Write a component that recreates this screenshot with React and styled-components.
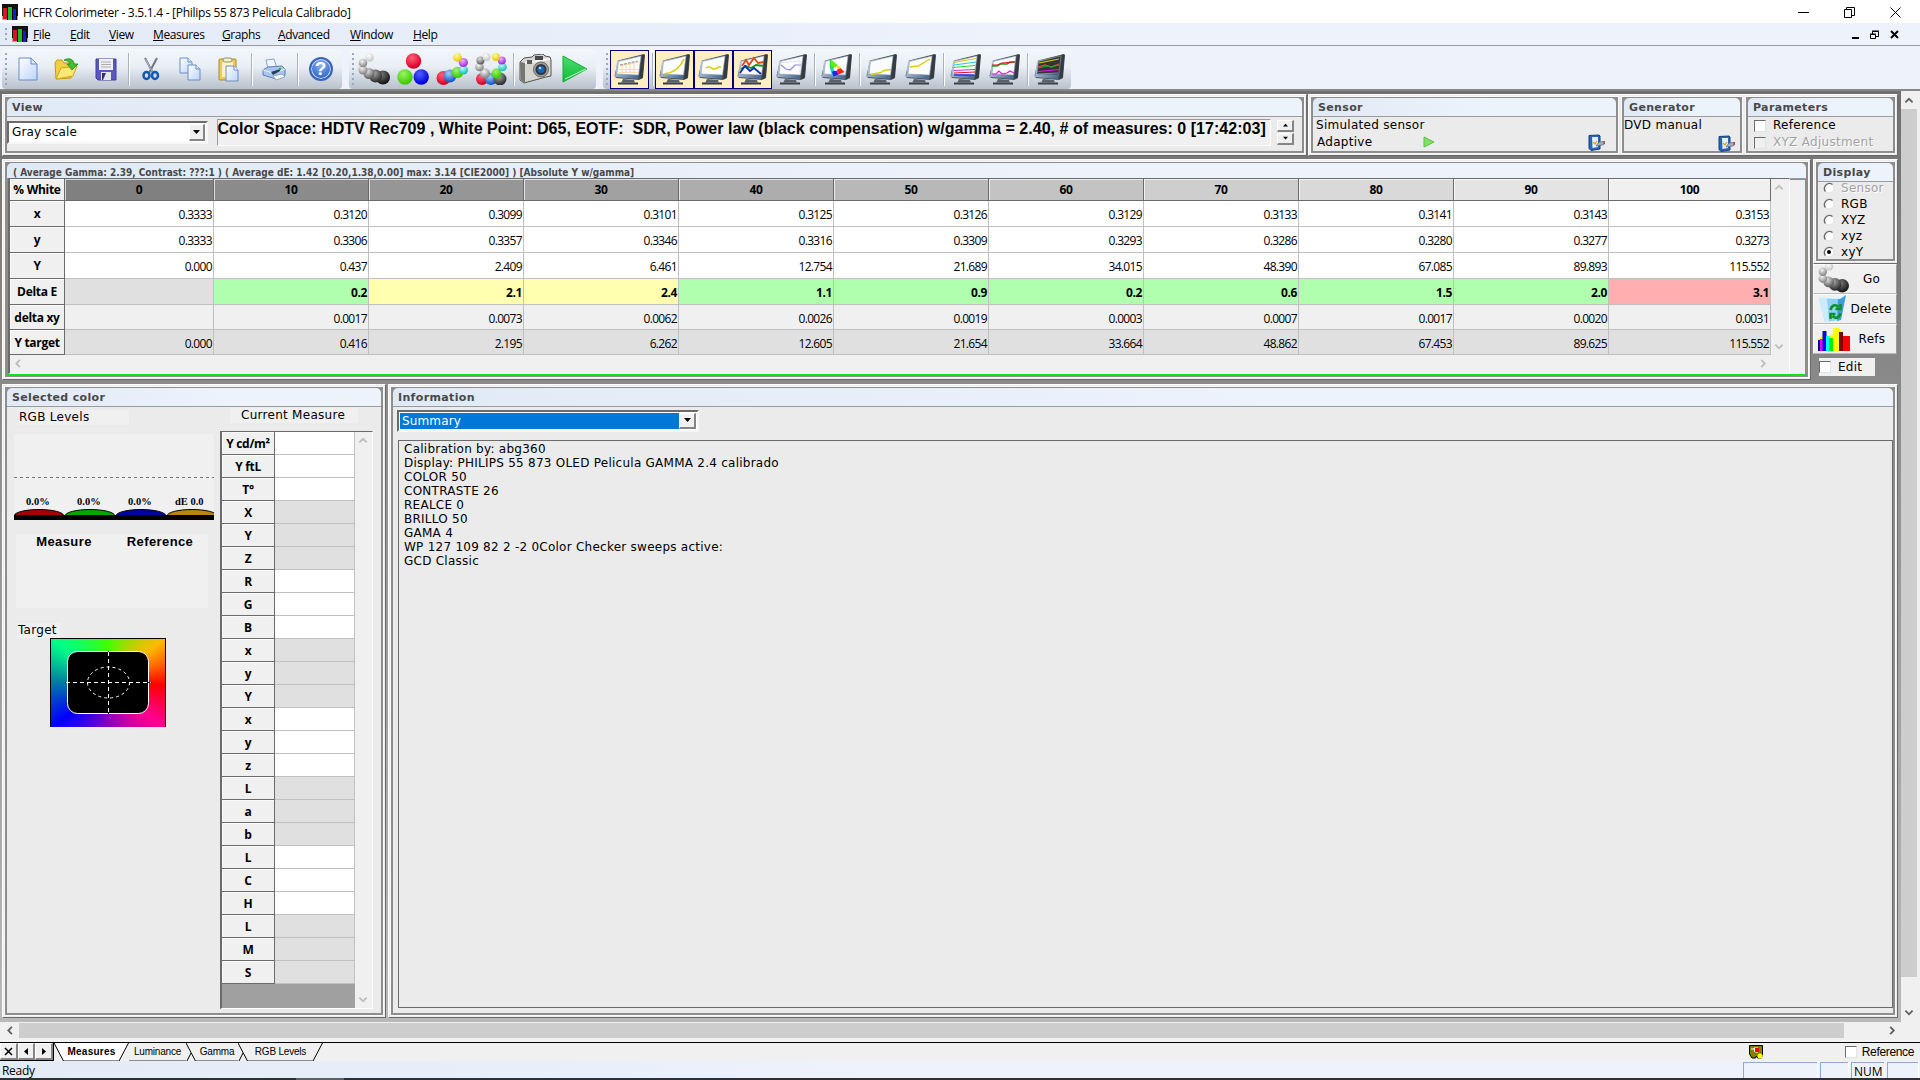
import React from "react";
import styled, { createGlobalStyle, css } from "styled-components";

const GlobalStyle = createGlobalStyle`
  * {
    box-sizing: border-box;
  }
  body {
    margin: 0;
    overflow: hidden;
    background: #fff;
  }
`;

const ui = `"Open Sans", "Noto Sans", sans-serif`;
const verdana = `"DejaVu Sans", sans-serif`;
const arial = `"Liberation Sans", Arial, sans-serif`;

const Window = styled.div`
  width: 1920px;
  height: 1080px;
  display: flex;
  flex-direction: column;
  font-family: ${ui};
  font-size: 12px;
  color: #000;
  white-space: pre;
  overflow: hidden;
`;

/* ---------- title and menu ---------- */

const TitleBar = styled.div`
  height: 23px;
  display: flex;
  align-items: center;
  padding: 1px 19px 0 2px;
  background: #fff;
  letter-spacing: -0.27px;
`;

const TitleText = styled.span`
  flex: 1;
  padding-left: 5px;
`;

const WindowButtons = styled.div`
  display: flex;
  align-items: center;
  gap: ${(props) => props.$gap}px;
`;

const MenuBar = styled.div`
  height: 23px;
  display: flex;
  align-items: center;
  padding: 0 21px 0 5px;
  border-bottom: 1px solid #9a9a9a;
  background: linear-gradient(90deg, #e3ebf7, #eef3fb 60%);
`;

const MenuItems = styled.div`
  flex: 1;
  display: flex;
  gap: 19px;
  padding-left: 5px;
`;

const MenuItem = styled.span`
  width: ${(props) => props.$w}px;
  letter-spacing: -0.4px;
  &::first-letter {
    text-decoration: underline;
  }
`;

const Grip = styled.div`
  width: 2px;
  height: ${(props) => props.$h}px;
  margin-right: ${(props) => props.$gap}px;
  background: repeating-linear-gradient(#93a8c6 0 2px, transparent 2px 5px);
`;

/* ---------- toolbars ---------- */

const ToolBars = styled.div`
  height: 45px;
  display: flex;
  gap: 7px;
  padding: 3px 0 0 2px;
  background: #eef3fb;
  border-bottom: 2px solid #878787;
`;

const ToolBar = styled.div`
  width: ${(props) => props.$w}px;
  display: flex;
  align-items: center;
  padding-left: 3px;
  border-radius: 4px;
  background: linear-gradient(#f3f7fc 0%, #e9eef4 45%, #cdd5df 75%, #b9c1cc 100%);
`;

const ToolButton = styled.div`
  width: 39px;
  height: 39px;
  display: flex;
  align-items: center;
  justify-content: center;
  ${(props) =>
    props.$active &&
    css`
      background: #ffeec2;
      border: 1px solid #000080;
    `}
`;

const ToolSep = styled.div`
  width: 1px;
  height: 33px;
  margin: 0 2px 0 3px;
  background: #aab2bd;
  box-shadow: 1px 0 #fff;
`;

/* ---------- workspace ---------- */

const Workspace = styled.div`
  flex: 1;
  display: flex;
  border-bottom: 2px solid #f4f4f4;
  background: #f0f0f0;
`;

const ViewPort = styled.div`
  width: 1901px;
  display: flex;
  flex-direction: column;
`;

const Desk = styled.div`
  height: 931px;
  display: flex;
  flex-direction: column;
  padding: 3px 0 0 2px;
  background: linear-gradient(#707070, #8a8a8a 32%, #b9b9b9);
`;

const Row = styled.div`
  height: ${(props) => props.$h}px;
  margin-bottom: ${(props) => props.$after || 0}px;
  display: flex;
  gap: ${(props) => props.$gap}px;
`;

const Frame = styled.div`
  width: ${(props) => props.$w}px;
  height: ${(props) => (props.$h ? props.$h + "px" : "auto")};
  flex: none;
  display: flex;
  gap: 4px;
  padding: 2px;
  border: 1px solid #fff;
  border-right-color: #6c6c6c;
  border-bottom-color: #6c6c6c;
  background: #ececec;
`;

const GroupBox = styled.div`
  width: ${(props) => (props.$w ? props.$w + "px" : "auto")};
  flex: ${(props) => (props.$w ? "none" : 1)};
  min-width: 0;
  display: flex;
  flex-direction: column;
  border: 2px solid #8d8d8d;
  border-top-width: 1px;
  box-shadow: 0 0 0 1px #fafafa;
  background: linear-gradient(#8d8d8d 8px, #ebebeb 8px);
`;

const GroupTitle = styled.div`
  height: 19px;
  flex: none;
  padding: 1px 0 0 5px;
  overflow: hidden;
  border-bottom: 1px solid #9b9b9b;
  border-radius: 5px 5px 0 0;
  background: linear-gradient(90deg, #e0eaf6, #edf3fb 60%);
  font: bold 11px/17px ${verdana};
  letter-spacing: 0.35px;
  color: #484848;
  ${(props) =>
    props.$small &&
    css`
      height: 16px;
      padding-left: 6px;
      font: bold 10px/17px "DejaVu Sans Condensed", ${verdana};
      font-stretch: condensed;
      letter-spacing: 0;
    `}
`;

function Group({ title, w, small, children }) {
  return (
    <GroupBox $w={w}>
      <GroupTitle $small={small}>{title}</GroupTitle>
      {children}
    </GroupBox>
  );
}

const Label = styled.div`
  font: 12px/15px ${verdana};
  letter-spacing: 0.28px;
  ${(props) =>
    props.$off &&
    css`
      color: #a3a3a3;
      text-shadow: 1px 1px #fff;
    `}
`;

const Box = styled.div`
  width: 12px;
  height: 12px;
  flex: none;
  border: 1px solid #6b6b6b;
  border-right-color: #e3e3e3;
  border-bottom-color: #e3e3e3;
  background: ${(props) => (props.$off ? "#f0f0f0" : "#fff")};
`;

/* ---------- view row ---------- */

const ViewBody = styled.div`
  flex: 1;
  display: flex;
  padding: 2px 8px 0 0;
`;

const Combo = styled.div`
  width: ${(props) => props.$w}px;
  height: ${(props) => props.$h}px;
  margin-top: ${(props) => props.$top || 0}px;
  display: flex;
  padding: 1px;
  border: 2px solid #6b6b6b;
  border-right-color: #f6f6f6;
  border-bottom-color: #f6f6f6;
  background: #fff;
`;

const ComboText = styled.div`
  flex: 1;
  padding-left: 2px;
  font: 12px/17px ${verdana};
  letter-spacing: 0.15px;
  background: ${(props) => (props.$selected ? "#0078d7" : "#fff")};
  color: ${(props) => (props.$selected ? "#fff" : "#000")};
`;

const RaisedButton = styled.div`
  width: ${(props) => props.$w}px;
  height: ${(props) => (props.$h ? props.$h + "px" : "auto")};
  display: flex;
  align-items: center;
  justify-content: center;
  border: 1px solid #fff;
  border-right: 2px solid #858585;
  border-bottom: 2px solid #858585;
  background: #f0f0f0;
`;

const InfoField = styled.div`
  width: 1057px;
  height: 27px;
  margin: 0 6px 0 9px;
  border: 1px solid #9a9a9a;
  border-right-color: #fff;
  border-bottom-color: #fff;
  background: #f0f0f0;
  font: bold 16px/17px ${arial};
  letter-spacing: 0.03px;
`;

const Spinner = styled.div`
  display: flex;
  flex-direction: column;
  gap: 1px;
  padding-top: 1px;
`;

const SensorBody = styled.div`
  flex: 1;
  display: flex;
  flex-direction: column;
  padding: 0 ${(props) => props.$right}px 0 ${(props) => props.$left}px;
  gap: 1px;
`;

const SensorLine = styled.div`
  display: flex;
  align-items: center;
  height: 16px;
`;

const Spacer = styled.div`
  flex: ${(props) => (props.$w ? "none" : 1)};
  width: ${(props) => props.$w || 0}px;
`;

const CheckRow = styled.div`
  display: flex;
  align-items: center;
  gap: 7px;
  height: 17px;
`;

const CheckList = styled.div`
  padding: 0 0 0 6px;
`;

/* ---------- measures table ---------- */

const TableArea = styled.div`
  flex: 1;
  display: flex;
  border: 1px solid #14e014;
  border-top: none;
  background: linear-gradient(#14e014, #14e014) top right / 20px 1px no-repeat #f0f0f0;
`;

const TablePane = styled.div`
  display: flex;
  flex-direction: column;
  margin-top: -1px;
  width: 1782px;
  border: 1px solid #6b6b6b;
  border-left-width: 2px;
  border-right-color: #fdfdfd;
  border-bottom-color: #fdfdfd;
  background: #f0f0f0;
`;

const TableRow = styled.div`
  display: grid;
  grid-template-columns: 55px 149px repeat(9, 155px) 162px;
  height: ${(props) => props.$h}px;
`;

const HeadCell = styled.div`
  display: flex;
  align-items: center;
  justify-content: center;
  border-right: 1px solid #6b6b6b;
  border-bottom: 1px solid #6b6b6b;
  box-shadow: inset 1px 1px #ffffffb0;
  background: ${(props) => props.$bg || "#f0f0f0"};
  font-weight: bold;
  letter-spacing: -0.3px;
`;

const Cell = styled.div`
  display: flex;
  align-items: center;
  justify-content: flex-end;
  padding: 2px 1px 0 0;
  border-right: 1px solid #c0c0c0;
  border-bottom: 1px solid #c0c0c0;
  background: ${(props) => props.$bg};
  font-weight: ${(props) => (props.$bold ? "bold" : "normal")};
  letter-spacing: ${(props) => (props.$bold ? -0.4 : -0.65)}px;
`;

const TableFoot = styled.div`
  flex: 1;
  display: flex;
  align-items: center;
  justify-content: space-between;
  padding: 0 21px 2px 4px;
`;

const TableMain = styled.div`
  display: flex;
`;

const Arrows = styled.div`
  width: 18px;
  display: flex;
  flex-direction: column;
  align-items: center;
  justify-content: space-between;
  padding: 5px 2px 4px 0;
  background: #f0f0f0;
`;

/* ---------- display column ---------- */

const SideColumn = styled.div`
  width: 86px;
  display: flex;
  flex-direction: column;
`;

const RadioList = styled.div`
  flex: 1;
  display: flex;
  flex-direction: column;
  margin-top: -2px;
  padding-left: 5px;
`;

const RadioRow = styled.div`
  height: 16px;
  display: flex;
  align-items: center;
  gap: 6px;
`;

const SideButton = styled.div`
  height: 30px;
  width: 84px;
  display: flex;
  align-items: center;
  padding: 0 2px 0 4px;
  border: 1px solid #fbfbfb;
  border-right-color: #9a9a9a;
  border-bottom-color: #b8b8b8;
  background: #f0f0f0;
`;

const SideLabel = styled(Label)`
  flex: 1;
  text-align: center;
`;

const EditBox = styled.div`
  width: 56px;
  height: 18px;
  margin: 4px 0 0 6px;
  display: flex;
  align-items: center;
  gap: 7px;
  background: #f0f0f0;
`;

/* ---------- selected color ---------- */

const ColorBody = styled.div`
  flex: 1;
  display: flex;
`;

const LeftSide = styled.div`
  width: 213px;
  display: flex;
  flex-direction: column;
  padding: 3px 0 0 7px;
`;

const Caption = styled(Label)`
  width: ${(props) => props.$w}px;
  padding-left: ${(props) => props.$pad || 1}px;
  margin-left: ${(props) => props.$x || 0}px;
  background: #f0f0f0;
`;

const Levels = styled.svg`
  display: block;
  margin: 9px 0 14px;
  background: #f0f0f0;
  font: bold 10.5px "Liberation Serif", serif;
`;

const Compare = styled.div`
  width: 192px;
  height: 74px;
  margin: 0 0 15px 2px;
  display: grid;
  grid-template-columns: 1fr 1fr;
  background: #f0f0f0;
  text-align: center;
  font: bold 13px/16px ${arial};
  letter-spacing: 0.4px;
`;

const Target = styled.div`
  width: 116px;
  height: 89px;
  margin: 0 0 0 36px;
  border: 1px solid #000;
  border-bottom: none;
  background: conic-gradient(
    #40ff00 0deg,
    #ffb800 52deg,
    #ff0000 92deg,
    #ff0090 128deg,
    #8800c0 180deg,
    #0000ff 232deg,
    #0080a0 272deg,
    #00ff88 308deg,
    #40ff00 360deg
  );
`;

const MeasureSide = styled.div`
  display: flex;
  flex-direction: column;
  padding-top: 1px;
`;

const MeasureGrid = styled.div`
  width: 153px;
  height: 578px;
  margin-top: 8px;
  display: flex;
  border: 1px solid #6b6b6b;
  border-left-width: 2px;
  border-right-color: #fff;
  border-bottom-color: #fff;
  background: #f0f0f0;
`;

const MeasureRows = styled.div`
  width: 133px;
  display: flex;
  flex-direction: column;
  background: #a0a0a0;
`;

const MeasureRow = styled.div`
  height: 23px;
  display: grid;
  grid-template-columns: 53px 80px;
`;

/* ---------- information ---------- */

const InfoBody = styled.div`
  flex: 1;
  display: flex;
  flex-direction: column;
  padding: 3px 0 5px 4px;
`;

const Notes = styled.div`
  flex: 1;
  margin: 8px 0 0 1px;
  padding: 1px 5px;
  border: 1px solid #6b6b6b;
  font: 12px/14px ${verdana};
  letter-spacing: 0.25px;
`;

/* ---------- scroll bars ---------- */

const HScroll = styled.div`
  height: 17px;
  display: flex;
  align-items: center;
  padding: 1px 4px 1px 6px;
  background: #f0f0f0;
`;

const HThumb = styled.div`
  width: 1825px;
  height: 15px;
  margin: 0 auto 0 3px;
  background: #cdcdcd;
`;

const VScroll = styled.div`
  width: 16px;
  display: flex;
  flex-direction: column;
  align-items: center;
  padding-top: 6px;
  background: #f0f0f0;
`;

const VThumb = styled.div`
  width: 16px;
  height: 868px;
  margin: 3px 0 31px;
  background: #cdcdcd;
`;

/* ---------- tabs and status ---------- */

const TabBar = styled.div`
  height: 19px;
  display: flex;
  border-top: 1px solid #000;
  background: #f0f0f0;
  font: 10px/17px ${arial};
`;

const TabNav = styled.div`
  width: 54px;
  height: 18px;
  display: flex;
  border-right: 1px solid #000;
  border-bottom: 1px solid #000;
`;

const Tab = styled.div`
  width: ${(props) => props.$w}px;
  height: 18px;
  text-align: center;
  border-bottom: 1px solid #8d8d8d;
  background: ${(props) => (props.$active ? "#fff" : "transparent")};
  font-weight: ${(props) => (props.$active ? "bold" : "normal")};
  letter-spacing: ${(props) => (props.$active ? 0.25 : -0.2)}px;
`;

const TabRight = styled.div`
  flex: 1;
  display: flex;
  align-items: center;
  justify-content: flex-end;
  gap: 5px;
  padding-right: 6px;
  font: 12px/17px ${arial};
  letter-spacing: -0.35px;
`;

const StatusBar = styled.div`
  height: 17px;
  display: flex;
  gap: 3px;
  padding: 1px 2px 0 2px;
  line-height: 18px;
  background: linear-gradient(90deg, #e3ebf7, #eef3fb 50%);
`;

const StatusText = styled.span`
  flex: 1;
  letter-spacing: -0.3px;
`;

const StatusPane = styled.div`
  width: ${(props) => props.$w}px;
  padding-left: 2px;
  border: 1px solid #8faad0;
  border-width: 1px 0 0 1px;
  box-shadow: 1px 0 #fff;
  line-height: 18px;
`;

const TaskEdge = styled.div`
  height: 2px;
  background: linear-gradient(90deg, #2f3035 296px, #606166 296px 344px, #2f3035 344px);
`;

/* ---------- drawings ---------- */

function Logo({ size = 16 }) {
  return (
    <svg width={size} height={size} viewBox="0 0 16 16">
      <rect width="16" height="16" fill="#111" />
      <path d="M0 12h16v4H0z" fill="#aaa" />
      <rect x="1" y="4" width="4" height="11" fill="#e01020" />
      <rect x="6" y="3" width="4" height="13" fill="#18c030" />
      <rect x="11" y="5" width="3" height="11" fill="#1020d0" />
      <path d="M5.500 4v12M10.500 3v13M14.500 5v11" stroke="#000" />
    </svg>
  );
}

function Chevron({ dir, color = "#606060" }) {
  const paths = {
    up: "M1 6l4-4 4 4",
    down: "M1 3l4 4 4-4",
    left: "M6 1L2 5l4 4",
    right: "M3 1l4 4-4 4",
  };
  return (
    <svg width="10" height="9" viewBox="0 0 10 10" fill="none" stroke={color} strokeWidth="2">
      <path d={paths[dir]} />
    </svg>
  );
}

function Triangle({ dir, s = 7 }) {
  const points = {
    down: "0,1 7,1 3.5,5",
    up: "0,5 7,5 3.5,1",
    left: "5,0 5,7 1,3.5",
    right: "2,0 2,7 6,3.5",
  };
  return (
    <svg width={s} height={s} viewBox="0 0 7 7">
      <polygon points={points[dir]} />
    </svg>
  );
}

const HiddenDefs = styled.svg`
  position: absolute;
`;

const ballColors = {
  white: ["#fff", "#c8c8c8"],
  light: ["#f4f4f4", "#888"],
  gray: ["#e0e0e0", "#606060"],
  dark: ["#a8a8a8", "#303030"],
  black: ["#777", "#181818"],
  red: ["#ff6078", "#d80028"],
  green: ["#98f860", "#40c808"],
  blue: ["#5060ff", "#0000d8"],
  sky: ["#a0d0ff", "#1858c8"],
  cyan: ["#c0fff8", "#18c0b8"],
  violet: ["#f0b0ff", "#a030d8"],
  yellow: ["#ffffa0", "#e8c800"],
};

function Defs() {
  return (
    <HiddenDefs width="0" height="0">
      <defs>
        {Object.entries(ballColors).map(([name, [a, b]]) => (
          <radialGradient key={name} id={name} cx="0.4" cy="0.3" r="0.65">
            <stop offset="0" stopColor={a} />
            <stop offset="1" stopColor={b} />
          </radialGradient>
        ))}
        <linearGradient id="paper" x2="1" y2="1">
          <stop offset="0" stopColor="#fff" />
          <stop offset="1" stopColor="#bcd4fa" />
        </linearGradient>
        <linearGradient id="shell" x2="1" y2="0.6">
          <stop offset="0" stopColor="#d4e2f2" />
          <stop offset="1" stopColor="#4d6c94" />
        </linearGradient>
        <linearGradient id="go" x2="0" y2="1">
          <stop offset="0" stopColor="#4be070" />
          <stop offset="1" stopColor="#10b838" />
        </linearGradient>
      </defs>
    </HiddenDefs>
  );
}

function Balls({ list, size = 32, box = "0 0 32 32" }) {
  return (
    <svg width={size} height={size} viewBox={box}>
      {list.map(([x, y, r, fill], i) => (
        <circle key={i} cx={x} cy={y} r={r} fill={`url(#${fill})`} />
      ))}
    </svg>
  );
}

const grayBalls = [
  [25, 24.500, 7, "black"],
  [17.500, 23, 6.500, "dark"],
  [11, 20.500, 5.500, "gray"],
  [5, 17, 4.500, "light"],
  [5, 10, 4.300, "light"],
  [11.500, 4.500, 4.300, "white"],
];
const rgbBalls = [
  [16.500, 8, 7.700, "red"],
  [8, 24, 7.700, "green"],
  [24.200, 24, 7.700, "blue"],
];
const hueBalls = [
  [7.500, 25, 7, "red"],
  [14, 23, 6.500, "sky"],
  [21.500, 19.500, 5.700, "green"],
  [27.500, 17, 4.500, "cyan"],
  [27.300, 9.500, 4.600, "violet"],
  [21.500, 4.500, 4.300, "yellow"],
];
const ringBalls = [
  [7, 26, 6, "red"],
  [16, 26, 6, "sky"],
  [25, 26, 6.500, "dark"],
  [21.500, 20.500, 5, "green"],
  [10, 20.500, 5, "light"],
  [4.500, 14, 4.300, "light"],
  [5.500, 7.500, 4, "gray"],
  [11.500, 4, 4, "white"],
  [27.500, 14, 4.300, "cyan"],
  [26.800, 7.500, 4, "violet"],
  [21, 4, 4, "yellow"],
];

function Monitor({ dark, children }) {
  return (
    <svg width="33" height="33" viewBox="0 0 33 33">
      <polygon points="5,7.500 31,1 32,2 30,25 26,27 3,25 1.500,23" fill="#4a5058" />
      <polygon points="4,8 28,3 25,26 2,24" fill="url(#shell)" />
      <polygon points="29,1.500 31.500,2 29.500,25 26,26" fill="#343a42" />
      <polygon points="5.500,8.500 28,3 25.500,22 4,21" fill={dark ? "#333" : "#fbfcfc"} stroke="#8898a8" strokeWidth="0.5" />
      <polygon points="10,26 21,27 22,30 8,30" fill="#59616b" />
      <path d="M5 30.500h20" stroke="#343a42" strokeWidth="2" />
      <path d="M6 29.700h17" stroke="#8a929b" strokeWidth="0.600" />
      <g fill="none" strokeWidth="1.200">{children}</g>
    </svg>
  );
}

const monitors = {
  table: (
    <Monitor>
      <path d="M7 13l19-4M6 16.500h20M6 19.500h19M9 12v8M13 11v9M17 10v10M21 10v11" stroke="#f7dcae" />
      <path d="M7 12l18-4" stroke="#999" strokeDasharray="3 1" />
    </Monitor>
  ),
  luminance: (
    <Monitor>
      <path d="M6 21c9-1 16-6 20-15" stroke="#d8d000" strokeWidth="1.500" />
    </Monitor>
  ),
  gamma: (
    <Monitor>
      <path d="M9 15c4-3 5 1 8 1s4-3 7-2" stroke="#d8d000" strokeWidth="1.500" />
    </Monitor>
  ),
  rgb: (
    <Monitor>
      <path d="M5 16l5-3 5 2 5-3 8 1" stroke="#209020" strokeWidth="1.800" />
      <path d="M4 20l5-7 5 5 4-3 7 6" stroke="#1030a0" strokeWidth="1.800" />
      <path d="M6 13l4-6 3 5 5-7 4 5 6-1" stroke="#e04818" strokeWidth="1.800" />
    </Monitor>
  ),
  temp: (
    <Monitor>
      <path d="M6 12l5 4 4 1 5-5 6 0" stroke="#9088e0" />
      <path d="M5 10l20-2v12" stroke="#d8d8e8" strokeWidth="0.700" />
    </Monitor>
  ),
  cie: (
    <Monitor>
      <path d="M11 6.500c-1.500 1-1.500 5-1 9l6 1z" fill="#20e040" />
      <path d="M11 6.500l6 5-1 5-5-4z" fill="#60f000" />
      <path d="M10 15l6 1-3 7.500c-1-1-2-4-3-8.500z" fill="#20c8f0" />
      <path d="M16 16l-4 3 1.500 4.500 5-2z" fill="#3020f0" />
      <path d="M16 16l2.500 5.500 6-2.500-4-4z" fill="#ff2020" />
      <path d="M17 11.500l4 3.500-5 2z" fill="#f8d820" />
      <circle cx="15.500" cy="16" r="2" fill="#fff" />
    </Monitor>
  ),
  nearBlack: (
    <Monitor>
      <path d="M6 21.500l10-2 3-2 7-1" stroke="#d8d000" strokeWidth="1.400" />
    </Monitor>
  ),
  nearWhite: (
    <Monitor>
      <path d="M6 14l8-1 12-7" stroke="#d8d000" strokeWidth="1.400" />
    </Monitor>
  ),
  satLum: (
    <Monitor>
      <path d="M5 9.500l22-4" stroke="#d8d000" />
      <path d="M5 12l22-3" stroke="#20d0e0" />
      <path d="M5 14.500l21-2" stroke="#20e020" />
      <path d="M5 17.500l21-1" stroke="#f010f0" />
      <path d="M5 20l21-1" stroke="#e01020" />
      <path d="M5 22h20" stroke="#1020f0" />
    </Monitor>
  ),
  satShift: (
    <Monitor>
      <path d="M4 13h5l3-2h7l3-2h5" stroke="#20a020" strokeWidth="1.600" />
      <path d="M4 12l6 0 4-2 13-1" stroke="#e01020" />
      <path d="M4 21h4l3-3 3 3 5-1 3-2 4 2" stroke="#f010f0" />
    </Monitor>
  ),
  combo: (
    <Monitor dark>
      <path d="M6 10l20-4" stroke="#d8d000" />
      <path d="M5 14l7-2 6 2 8-3" stroke="#e05020" />
      <path d="M5 15l9-2 5 1 7-2" stroke="#20a040" />
      <path d="M5 18.500l21-2" stroke="#f010f0" />
      <path d="M5 21l20-1" stroke="#8080f0" />
    </Monitor>
  ),
};

function NewIcon() {
  return (
    <svg width="20" height="24" viewBox="0 0 20 24">
      <path d="M1 1h12l6 6v16H1z" fill="url(#paper)" stroke="#6b8cc4" />
      <path d="M13 1v6h6z" fill="#dce8fb" stroke="#6b8cc4" />
    </svg>
  );
}

function OpenIcon() {
  return (
    <svg width="25" height="24" viewBox="0 0 25 24">
      <path d="M2 22L1 6l2-3h5l2 3h8v4l-1 11z" fill="#f3cf45" stroke="#c79a10" />
      <path d="M2 22L7 11l16-2-4 10z" fill="#ffe877" stroke="#d0a418" />
      <path d="M10 3c6-3 10 0 10 4h4l-6 6-5-6h3c0-2-2-3-6-4z" fill="#46bd35" stroke="#208a18" strokeWidth="0.800" />
    </svg>
  );
}

function SaveIcon() {
  return (
    <svg width="22" height="23" viewBox="0 0 22 23">
      <path d="M1 1h20v21H3l-2-2z" fill="#5a58c0" stroke="#403f9c" />
      <rect x="4" y="1" width="14" height="11" fill="#f1f1f4" />
      <path d="M6 4h10M6 6.500h10M6 9h10" stroke="#aaa" />
      <rect x="6" y="14" width="10" height="8" fill="#e6e6ee" />
      <path d="M7 15h4l-3 7h-1z" fill="#34346c" />
    </svg>
  );
}

function CutIcon() {
  return (
    <svg width="18" height="24" viewBox="0 0 18 24" fill="none">
      <path d="M3 1l8 15M15 1L7 16" stroke="#6a7684" strokeWidth="2" />
      <path d="M3.500 2l7 13" stroke="#d2dae2" strokeWidth="0.700" />
      <ellipse cx="4.500" cy="18.500" rx="3" ry="3.500" stroke="#1558b0" strokeWidth="2.500" />
      <ellipse cx="13" cy="18.500" rx="3" ry="3.500" stroke="#1558b0" strokeWidth="2.500" />
    </svg>
  );
}

function CopyIcon() {
  return (
    <svg width="22" height="24" viewBox="0 0 22 24" fill="url(#paper)" stroke="#6b8cc4">
      <path d="M1 1h8l4 4v11H1z" />
      <path d="M9 1v4h4" />
      <path d="M9 8h8l4 4v11H9z" />
      <path d="M17 8v4h4" />
    </svg>
  );
}

function PasteIcon() {
  return (
    <svg width="21" height="25" viewBox="0 0 21 25">
      <rect x="1" y="2" width="17" height="21" rx="1" fill="#efca55" stroke="#a88a2c" />
      <rect x="4" y="5" width="11" height="15" fill="#fff4c8" />
      <rect x="5" y="1" width="9" height="4" rx="2" fill="#f3f1d8" stroke="#96906c" />
      <path d="M8 9h8l4 4v11H8z" fill="url(#paper)" stroke="#6b8cc4" />
      <path d="M16 9v4h4" fill="#fff" stroke="#6b8cc4" />
    </svg>
  );
}

function PrintIcon() {
  return (
    <svg width="24" height="23" viewBox="0 0 24 23">
      <path d="M4 2l8-1 3 9-9 1z" fill="#eef5ff" stroke="#8aa4c6" />
      <path d="M1 12l5-3 14-1 3 3v6l-9 4-13-4z" fill="#a9c6ee" stroke="#5c7eac" />
      <path d="M1 12l10 3 12-4" fill="none" stroke="#e8f2ff" />
      <path d="M9 14l9-3v2l-7 4z" fill="#263c66" />
      <path d="M11 18l9-2 3 3-9 3z" fill="#fff" stroke="#8aa4c6" />
      <circle cx="18" cy="11" r="1.200" fill="#2eb040" />
    </svg>
  );
}

const HelpBadge = styled.div`
  width: 24px;
  height: 24px;
  border: 2px solid #3a66b4;
  border-radius: 50%;
  box-shadow: inset 0 0 0 1px #cfe0fb;
  background: radial-gradient(circle at 50% 30%, #8db4f4, #2f66cc 75%);
  color: #fff;
  font: bold 19px/20px ${arial};
  text-align: center;
`;

function CameraIcon() {
  return (
    <svg width="33" height="30" viewBox="0 0 33 30">
      <path d="M1 8l4-4 8-1 2-2 9-1 2 2 5 1 1 3v16l-5 1-22 6-4-3z" fill="#d7d5d0" stroke="#55534f" />
      <path d="M1 8l5 1v20l-4-3z" fill="#77756f" />
      <path d="M6 9l25-4" stroke="#f8f8f6" strokeWidth="2" />
      <rect x="16" y="2" width="8" height="4" fill="#45484e" />
      <circle cx="22" cy="15.500" r="7.500" fill="#a09e9a" stroke="#6c6a68" />
      <circle cx="22" cy="15.500" r="5.500" fill="#2f3540" />
      <circle cx="22" cy="15.500" r="3.600" fill="#1666b8" />
      <circle cx="21" cy="14" r="1.300" fill="#9fd8ff" />
      <rect x="8" y="6" width="5" height="4" fill="#5a5c60" />
    </svg>
  );
}

function PlayIcon() {
  return (
    <svg width="26" height="28" viewBox="0 0 26 28">
      <path d="M1 1l24 13L1 27z" fill="url(#go)" stroke="#18a838" />
      <path d="M3 24l21-10" stroke="#aaf5b4" strokeWidth="1.300" />
    </svg>
  );
}

function ConfigIcon() {
  return (
    <svg width="18" height="17" viewBox="0 0 18 17">
      <path d="M1 1.500l10-.5 1 1v13l-9 1.500-2-2z" fill="#2a66b8" stroke="#173f80" />
      <path d="M4 3h6v10l-5.500 1z" fill="#e4f0fc" />
      <path d="M5 8l2 2 2-3" fill="none" stroke="#e0a020" strokeWidth="1.300" />
      <path d="M8 12l3-4 5-.5 0 3-4 1z" fill="#9fb0c4" stroke="#56667c" strokeWidth="0.700" />
      <rect x="15.500" y="7" width="1.500" height="3" fill="#c84838" />
    </svg>
  );
}

function BinIcon() {
  return (
    <svg width="30" height="28" viewBox="0 0 30 28">
      <path d="M1 3l24-2-4 24-14 2z" fill="#8fd0f4" />
      <path d="M1 3l8 0 2 24-4 0z" fill="#c9ecff" />
      <path d="M20 3l8-3-5 25-4 1z" fill="#3d9fdc" />
      <path d="M1 3l27-3-6 4z" fill="#e6f7ff" />
      <path d="M12.500 15c1-5 5-6 8-3M22.500 9v5h-5M22.500 18c-1 5-5 6-8 3M12.500 24v-5h5" fill="none" stroke="#0d9220" strokeWidth="2.600" />
    </svg>
  );
}

function SpectrumIcon() {
  return (
    <svg width="32" height="24" viewBox="0 0 32 24">
      <path d="M0 12l3-2 4-7 4 6 4-2 3-5 4 0 3 6 4 1 3 1v14H0z" fill="#ffff00" />
      <rect y="13" width="2" height="11" fill="#000080" />
      <rect x="2" y="12" width="3" height="12" fill="#f000f0" />
      <rect x="4.500" y="4" width="4" height="20" fill="#0000ff" />
      <rect x="8" y="9" width="3.500" height="15" fill="#00ffff" />
      <rect x="11" y="11" width="4" height="13" fill="#00f000" />
      <rect x="15" y="1" width="6" height="23" fill="#ffff00" />
      <rect x="21" y="5" width="4" height="19" fill="#800000" />
      <rect x="25" y="9" width="7" height="15" fill="#ff0000" />
    </svg>
  );
}

function Radio({ checked }) {
  return (
    <svg width="12" height="12" viewBox="0 0 12 12">
      <circle cx="6" cy="6" r="5" fill="#fff" stroke="#e2e2e2" />
      <path d="M2.500 9.500A5 5 0 0 1 9.500 2.500" fill="none" stroke="#6b6b6b" strokeWidth="1.300" />
      {checked && <circle cx="6" cy="6" r="2" />}
    </svg>
  );
}

function Slant({ kind, active }) {
  return (
    <svg width="10" height="18" viewBox="0 0 10 18" fill="none" stroke="#000">
      {active && <path d={kind === "left" ? "M0 0h10v18z" : "M0 0h10L0 18z"} fill="#fff" stroke="none" />}
      {kind !== "right" && <path d="M0 0l9.500 18" />}
      {kind === "right" && <path d="M9.500 0L0 18" />}
      {kind === "both" && <path d="M1 18l4-8" />}
    </svg>
  );
}

/* ---------- data ---------- */

const menus = [
  ["File", 18],
  ["Edit", 20],
  ["View", 25],
  ["Measures", 50],
  ["Graphs", 37],
  ["Advanced", 53],
  ["Window", 44],
  ["Help", 26],
];

const heads = ["0", "10", "20", "30", "40", "50", "60", "70", "80", "90", "100"];
const headGrays = ["#808080", "#8b8b8b", "#969696", "#a1a1a1", "#adadad", "#b8b8b8", "#c3c3c3", "#cecece", "#d9d9d9", "#e4e4e4", "#f0f0f0"];
const deltaColors = ["#e0e0e0", "#afffaf", "#ffffaf", "#ffffaf", "#afffaf", "#afffaf", "#afffaf", "#afffaf", "#afffaf", "#afffaf", "#ffafaf"];

const rows = [
  { name: "x", h: 26, bg: "#fff", values: ["0.3333", "0.3120", "0.3099", "0.3101", "0.3125", "0.3126", "0.3129", "0.3133", "0.3141", "0.3143", "0.3153"] },
  { name: "y", h: 26, bg: "#fff", values: ["0.3333", "0.3306", "0.3357", "0.3346", "0.3316", "0.3309", "0.3293", "0.3286", "0.3280", "0.3277", "0.3273"] },
  { name: "Y", h: 26, bg: "#fff", values: ["0.000", "0.437", "2.409", "6.461", "12.754", "21.689", "34.015", "48.390", "67.085", "89.893", "115.552"] },
  { name: "Delta E", h: 26, bold: true, values: ["", "0.2", "2.1", "2.4", "1.1", "0.9", "0.2", "0.6", "1.5", "2.0", "3.1"] },
  { name: "delta xy", h: 25, bg: "#f0f0f0", values: ["", "0.0017", "0.0073", "0.0062", "0.0026", "0.0019", "0.0003", "0.0007", "0.0017", "0.0020", "0.0031"] },
  { name: "Y target", h: 25, bg: "#e0e0e0", values: ["0.000", "0.416", "2.195", "6.262", "12.605", "21.654", "33.664", "48.862", "67.453", "89.625", "115.552"] },
];

const measureNames = ["Y cd/m²", "Y ftL", "T°", "X", "Y", "Z", "R", "G", "B", "x", "y", "Y", "x", "y", "z", "L", "a", "b", "L", "C", "H", "L", "M", "S"];

const notes = `Calibration by: abg360
Display: PHILIPS 55 873 OLED Pelicula GAMMA 2.4 calibrado
COLOR 50
CONTRASTE 26
REALCE 0
BRILLO 50
GAMA 4
WP 127 109 82 2 -2 0Color Checker sweeps active:
GCD Classic`;

/* ---------- sections ---------- */

function Tools() {
  return (
    <ToolBars>
      <ToolBar $w={340}>
        <Grip $h={32} $gap={1} />
        <ToolButton><NewIcon /></ToolButton>
        <ToolButton><OpenIcon /></ToolButton>
        <ToolButton><SaveIcon /></ToolButton>
        <ToolSep />
        <ToolButton><CutIcon /></ToolButton>
        <ToolButton><CopyIcon /></ToolButton>
        <ToolButton><PasteIcon /></ToolButton>
        <ToolSep />
        <ToolButton><PrintIcon /></ToolButton>
        <Spacer $w={1} />
        <ToolSep />
        <Spacer $w={1} />
        <ToolButton><HelpBadge>?</HelpBadge></ToolButton>
      </ToolBar>
      <ToolBar $w={247}>
        <Grip $h={32} $gap={0} />
        <ToolButton><Balls list={grayBalls} /></ToolButton>
        <ToolButton><Balls list={rgbBalls} /></ToolButton>
        <ToolButton><Balls list={hueBalls} /></ToolButton>
        <ToolButton><Balls list={ringBalls} /></ToolButton>
        <ToolSep />
        <ToolButton><CameraIcon /></ToolButton>
        <ToolButton><PlayIcon /></ToolButton>
      </ToolBar>
      <ToolBar $w={468}>
        <Grip $h={32} $gap={2} />
        <ToolButton $active>{monitors.table}</ToolButton>
        <ToolSep />
        <ToolButton $active>{monitors.luminance}</ToolButton>
        <ToolButton $active>{monitors.gamma}</ToolButton>
        <ToolButton $active>{monitors.rgb}</ToolButton>
        <ToolButton>{monitors.temp}</ToolButton>
        <ToolSep />
        <ToolButton>{monitors.cie}</ToolButton>
        <ToolSep />
        <ToolButton>{monitors.nearBlack}</ToolButton>
        <ToolButton>{monitors.nearWhite}</ToolButton>
        <ToolSep />
        <ToolButton>{monitors.satLum}</ToolButton>
        <ToolButton>{monitors.satShift}</ToolButton>
        <ToolSep />
        <ToolButton>{monitors.combo}</ToolButton>
      </ToolBar>
    </ToolBars>
  );
}

function ViewRow() {
  return (
    <Row $h={62} $gap={1} $after={3}>
      <Frame $w={1305}>
        <Group title="View">
          <ViewBody>
            <Combo $w={201} $h={23} $top={2}>
              <ComboText>Gray scale</ComboText>
              <RaisedButton $w={16}><Triangle dir="down" /></RaisedButton>
            </Combo>
            <InfoField>Color Space: HDTV Rec709 , White Point: D65, EOTF:  SDR, Power law (black compensation) w/gamma = 2.40, # of measures: 0 [17:42:03]</InfoField>
            <Spinner>
              <RaisedButton $w={17} $h={12}><Triangle dir="up" s={5} /></RaisedButton>
              <RaisedButton $w={17} $h={12}><Triangle dir="down" s={5} /></RaisedButton>
            </Spinner>
          </ViewBody>
        </Group>
      </Frame>
      <Frame $w={590}>
        <Group title="Sensor" w={307}>
          <SensorBody $left={3} $right={10}>
            <SensorLine><Label>Simulated sensor</Label></SensorLine>
            <SensorLine>
              <Spacer $w={1} />
              <Label>Adaptive</Label>
              <Spacer $w={51} />
              <svg width="12" height="12" viewBox="0 0 12 12">
                <path d="M1 1l10 5-10 5z" fill="#80e060" stroke="#58c040" />
              </svg>
              <Spacer />
              <ConfigIcon />
            </SensorLine>
          </SensorBody>
        </Group>
        <Group title="Generator" w={120}>
          <SensorBody $left={0} $right={4}>
            <SensorLine><Label>DVD manual</Label></SensorLine>
            <Spacer />
            <SensorLine>
              <Spacer />
              <ConfigIcon />
            </SensorLine>
          </SensorBody>
        </Group>
        <Group title="Parameters">
          <CheckList>
            <CheckRow><Box /><Label>Reference</Label></CheckRow>
            <CheckRow><Box $off /><Label $off>XYZ Adjustment</Label></CheckRow>
          </CheckList>
        </Group>
      </Frame>
    </Row>
  );
}

function MeasuresRow() {
  return (
    <Row $h={221} $gap={2} $after={4}>
      <Frame $w={1809}>
        <Group small title="( Average Gamma: 2.39, Contrast: ???:1 ) ( Average dE: 1.42 [0.20,1.38,0.00] max: 3.14 [CIE2000] ) [Absolute Y w/gamma]">
          <TableArea>
            <TablePane>
              <TableMain>
                <div>
                  <TableRow $h={22}>
                    <HeadCell>% White</HeadCell>
                    {heads.map((h, i) => (
                      <HeadCell key={h} $bg={headGrays[i]}>{h}</HeadCell>
                    ))}
                  </TableRow>
                  {rows.map((row) => (
                    <TableRow key={row.name} $h={row.h}>
                      <HeadCell>{row.name}</HeadCell>
                      {row.values.map((v, i) => (
                        <Cell key={i} $bold={row.bold} $bg={row.bg || deltaColors[i]}>{v}</Cell>
                      ))}
                    </TableRow>
                  ))}
                </div>
                <Arrows>
                  <Chevron dir="up" color="#bdbdbd" />
                  <Chevron dir="down" color="#bdbdbd" />
                </Arrows>
              </TableMain>
              <TableFoot>
                <Chevron dir="left" color="#bdbdbd" />
                <Chevron dir="right" color="#bdbdbd" />
              </TableFoot>
            </TablePane>
          </TableArea>
        </Group>
      </Frame>
      <SideColumn>
        <Frame $w={85} $h={105}>
          <Group title="Display">
            <RadioList>
              {["Sensor", "RGB", "XYZ", "xyz", "xyY"].map((name) => (
                <RadioRow key={name}>
                  <Radio checked={name === "xyY"} />
                  <Label $off={name === "Sensor"}>{name}</Label>
                </RadioRow>
              ))}
            </RadioList>
          </Group>
        </Frame>
        <SideButton><Balls list={grayBalls} box="0 4 32 28" size={31} /><SideLabel>Go</SideLabel></SideButton>
        <SideButton><BinIcon /><SideLabel>Delete</SideLabel></SideButton>
        <SideButton><SpectrumIcon /><SideLabel>Refs</SideLabel></SideButton>
        <EditBox><Box /><Label>Edit</Label></EditBox>
      </SideColumn>
    </Row>
  );
}

function SelectedColor() {
  const humps = [
    [25, "#a80000", "0.0%", 12],
    [76, "#00a800", "0.0%", 63],
    [127, "#0000a8", "0.0%", 114],
    [178, "#b8860b", "dE 0.0", 161],
  ];
  return (
    <Frame $w={384}>
      <Group title="Selected color">
        <ColorBody>
          <LeftSide>
            <Caption $w={111} $x={4}>RGB Levels</Caption>
            <Levels width="200" height="86" viewBox="0 0 200 86">
              <path d="M0 43.500h200" stroke="#777" strokeDasharray="3 3" />
              {humps.map(([x, color, text, tx]) => (
                <g key={x}>
                  <ellipse cx={x} cy="82" rx="25" ry="6.500" fill={color} stroke="#000" />
                  <text x={tx} y="71">{text}</text>
                </g>
              ))}
              <rect y="81" width="200" height="5" />
            </Levels>
            <Compare>
              <span>Measure</span>
              <span>Reference</span>
            </Compare>
            <Caption $w={43} $x={3}>Target</Caption>
            <Target>
              <svg width="114" height="88" viewBox="0 0 114 88" fill="none" stroke="#fff">
                <rect x="16.500" y="12.500" width="81" height="62" rx="10" fill="#000" />
                <path d="M14 43.500h87M57.500 12v63" stroke="#000" />
                <path d="M15 43.500h85M57.500 13v62" strokeDasharray="4 3" />
                <ellipse cx="57.500" cy="43.500" rx="21" ry="15.500" strokeDasharray="3 3" />
              </svg>
            </Target>
          </LeftSide>
          <MeasureSide>
            <Caption $w={128} $x={10} $pad={11}>Current Measure</Caption>
            <MeasureGrid>
              <MeasureRows>
                {measureNames.map((name, i) => (
                  <MeasureRow key={i}>
                    <HeadCell>{name}</HeadCell>
                    <Cell $bg={Math.floor(i / 3) % 2 ? "#e0e0e0" : "#fff"} />
                  </MeasureRow>
                ))}
              </MeasureRows>
              <Arrows>
                <Chevron dir="up" color="#bdbdbd" />
                <Chevron dir="down" color="#bdbdbd" />
              </Arrows>
            </MeasureGrid>
          </MeasureSide>
        </ColorBody>
      </Group>
    </Frame>
  );
}

function Information() {
  return (
    <Frame $w={1510}>
      <Group title="Information">
        <InfoBody>
          <Combo $w={302} $h={22}>
            <ComboText $selected>Summary</ComboText>
            <RaisedButton $w={17}><Triangle dir="down" /></RaisedButton>
          </Combo>
          <Notes>{notes}</Notes>
        </InfoBody>
      </Group>
    </Frame>
  );
}

function Footer() {
  return (
    <>
      <TabBar>
        <TabNav>
          <RaisedButton $w={18}>
            <svg width="9" height="9" viewBox="0 0 9 9" stroke="#000" strokeWidth="1.500">
              <path d="M1 1l7 7M8 1L1 8" />
            </svg>
          </RaisedButton>
          <RaisedButton $w={17}><Triangle dir="left" /></RaisedButton>
          <RaisedButton $w={18}><Triangle dir="right" /></RaisedButton>
        </TabNav>
        <Slant kind="left" active />
        <Tab $w={55} $active>Measures</Tab>
        <Slant kind="right" active />
        <Tab $w={57}>Luminance</Tab>
        <Slant kind="both" />
        <Tab $w={42}>Gamma</Tab>
        <Slant kind="both" />
        <Tab $w={65}>RGB Levels</Tab>
        <Slant kind="right" />
        <TabRight>
          <svg width="14" height="14" viewBox="0 0 14 14">
            <path d="M.5.500h13V9l-1 4h-4l-1-2-1 2H3L.5 9z" fill="#808000" stroke="#000" />
            <path d="M2 4h4v3M5 3h4v4H6z" fill="none" stroke="#fff" />
            <rect x="6" y="3" width="4" height="4" fill="#f00" />
            <circle cx="11" cy="11" r="2.500" fill="#ff0" />
          </svg>
          <Spacer $w={72} />
          <Box />
          <span>Reference</span>
        </TabRight>
      </TabBar>
      <StatusBar>
        <StatusText>Ready</StatusText>
        <StatusPane $w={74} />
        <StatusPane $w={28} />
        <StatusPane $w={33}>NUM</StatusPane>
        <StatusPane $w={31} />
      </StatusBar>
      <TaskEdge />
    </>
  );
}

const App = () => {
  return (
    <Window>
      <GlobalStyle />
      <Defs />
      <TitleBar>
        <Logo />
        <TitleText>HCFR Colorimeter - 3.5.1.4 - [Philips 55 873 Pelicula Calibrado]</TitleText>
        <WindowButtons $gap={35}>
          <svg width="11" height="11" stroke="#000"><path d="M0 5.500h11" /></svg>
          <svg width="11" height="11" fill="none" stroke="#000">
            <path d="M.5 2.500h7v8h-7zM2.500 2.500v-2h8v8h-3" />
          </svg>
          <svg width="11" height="11" stroke="#000"><path d="M.5.500l10 10M10.500.500l-10 10" /></svg>
        </WindowButtons>
      </TitleBar>
      <MenuBar>
        <Grip $h={12} $gap={5} />
        <Logo />
        <MenuItems>
          {menus.map(([name, w]) => (
            <MenuItem key={name} $w={w}>{name}</MenuItem>
          ))}
        </MenuItems>
        <WindowButtons $gap={11}>
          <svg width="8" height="9"><path d="M1 8h7" stroke="#000" strokeWidth="2" /></svg>
          <svg width="9" height="9" fill="none" stroke="#000">
            <path d="M.5 4.500h5v4h-5zM2.500 4V1.500h6v5H6M2 1h7M0 4h6" />
          </svg>
          <svg width="9" height="9" stroke="#000" strokeWidth="2"><path d="M1 1l7 7M8 1L1 8" /></svg>
        </WindowButtons>
      </MenuBar>
      <Tools />
      <Workspace>
        <ViewPort>
          <Desk>
            <ViewRow />
            <MeasuresRow />
            <Row $h={634} $gap={2}>
              <SelectedColor />
              <Information />
            </Row>
          </Desk>
          <HScroll>
            <Chevron dir="left" />
            <HThumb />
            <Chevron dir="right" />
          </HScroll>
        </ViewPort>
        <VScroll>
          <Chevron dir="up" />
          <VThumb />
          <Chevron dir="down" />
        </VScroll>
      </Workspace>
      <Footer />
    </Window>
  );
};

export default App;
